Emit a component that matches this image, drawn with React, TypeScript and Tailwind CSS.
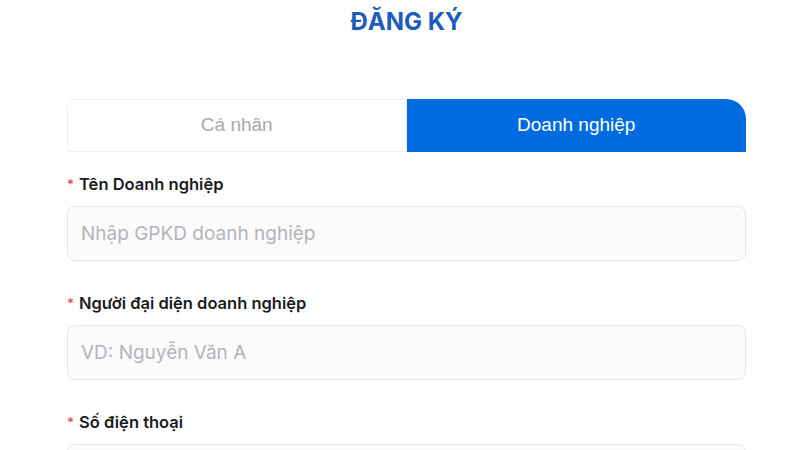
import { useState } from 'react'

type Tab = 'personal' | 'business'

const fields = [
  { label: 'Tên Doanh nghiệp', placeholder: 'Nhập GPKD doanh nghiệp' },
  { label: 'Người đại diện doanh nghiệp', placeholder: 'VD: Nguyễn Văn A' },
  { label: 'Số điện thoại', placeholder: 'Nhập số điện thoại' },
]

export default function App() {
  const [tab, setTab] = useState<Tab>('business')

  return (
    <div className="min-h-screen bg-white font-['Inter',sans-serif]">
      <div className="ml-[67px] w-[679px] pt-[6px]">
        <h1 className="text-center text-[24px] leading-[32px] font-bold text-[#1d5bbd]">ĐĂNG KÝ</h1>

        <div className="mt-[61px] flex h-[53px] font-['Liberation_Sans',sans-serif] text-[19px]">
          <button
            onClick={() => setTab('personal')}
            className={`w-1/2 shrink-0 rounded-tl-md border border-[#f0f0f2] ${
              tab === 'personal' ? 'bg-[#006be0] text-white rounded-tr-[20px]' : 'bg-white text-[#a9a9a9]'
            }`}
          >
            Cá nhân
          </button>
          <button
            onClick={() => setTab('business')}
            className={`w-1/2 shrink-0 ${
              tab === 'business' ? 'bg-[#006be0] text-white rounded-tr-[20px]' : 'bg-white text-[#a9a9a9]'
            }`}
          >
            Doanh nghiệp
          </button>
        </div>

        <div className="mt-[20px] flex flex-col gap-[30px]">
          {fields.map((f) => (
            <div key={f.label}>
              <label className="flex items-center text-[16.5px] leading-[24px] font-semibold text-[#1c1c1e]">
                <span className="mr-[5px] text-[13px] text-[#e5484d]">*</span>
                {f.label}
              </label>
              <input
                type="text"
                placeholder={f.placeholder}
                className="mt-[10px] h-[55px] w-full rounded-lg border border-[#e6e6e9] bg-[#fbfafc] px-[13px] text-[19px] text-[#333] placeholder:text-[#b4b4b8] focus:outline-none"
              />
            </div>
          ))}
        </div>
      </div>
    </div>
  )
}
